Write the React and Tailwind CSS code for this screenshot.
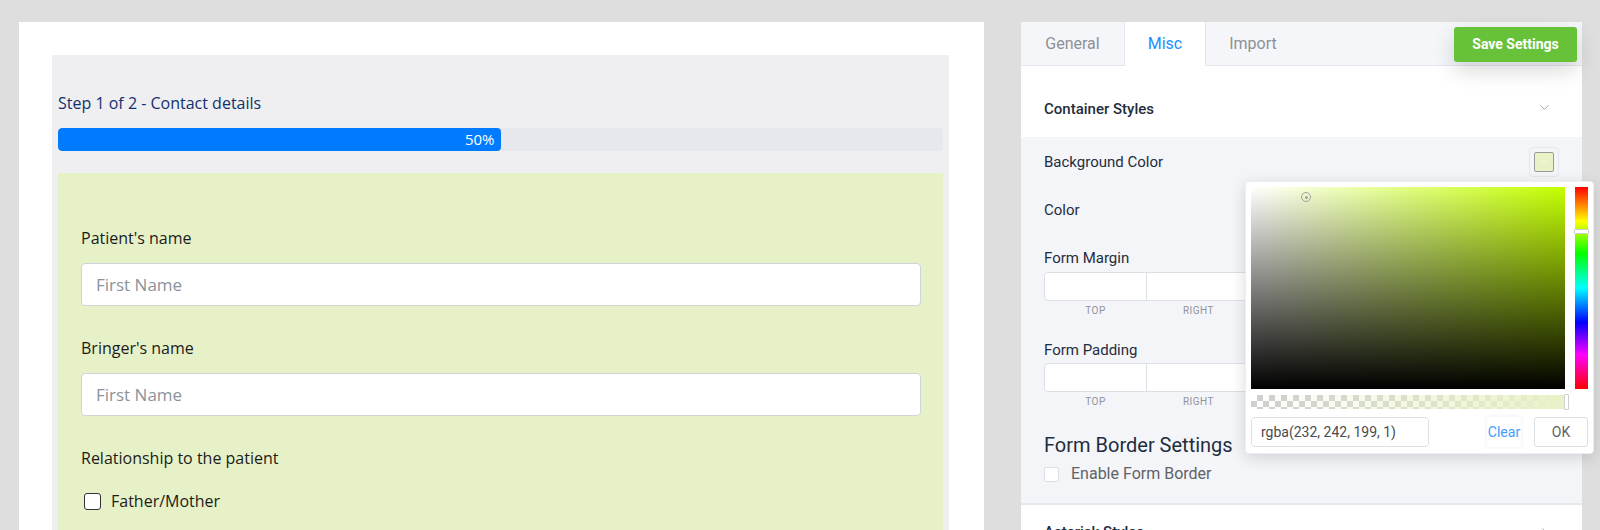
import { ChevronDown, ChevronRight } from 'lucide-react';

const leftFont = "font-['Open_Sans',sans-serif]";
const rightFont = "font-['Roboto',sans-serif]";

// small custom checkbox, drawn with spans so it looks the same everywhere
function Box({ className }) {
  return <span className={`inline-block shrink-0 bg-white ${className}`} />;
}

function FormPreview() {
  return (
    <div className={`w-[965px] h-[508px] bg-white pt-[33px] pl-[33px] pr-[35px] ${leftFont}`}>
      <div className="h-full bg-[#efeff2] px-[6px] pt-[37px]">
        <p className="text-[16px] leading-[22px] text-[#12306b]">Step 1 of 2 - Contact details</p>

        {/* progress bar */}
        <div className="mt-[14px] h-[23px] rounded-[4px] bg-[#e7e8ee] overflow-hidden">
          <div className="w-1/2 h-full bg-[#007bff] rounded-[4px] flex items-center justify-end pr-[6px] text-white text-[15px]">
            50%
          </div>
        </div>

        {/* form body */}
        <div className="mt-[22px] h-full bg-[#e7f1c8] pl-[23px] pr-[22px] pt-[53px]">
          <label className="block text-[16px] leading-[24px] font-medium text-[#1c1c1c]">Patient's name</label>
          <input
            type="text"
            placeholder="First Name"
            className="mt-[13px] w-full h-[43px] bg-white border border-[#ced4da] rounded-[4px] px-[14px] text-[17px] placeholder:text-[#8b929a] outline-none"
          />
          <label className="block mt-[30px] text-[16px] leading-[24px] font-medium text-[#1c1c1c]">Bringer's name</label>
          <input
            type="text"
            placeholder="First Name"
            className="mt-[13px] w-full h-[43px] bg-white border border-[#ced4da] rounded-[4px] px-[14px] text-[17px] placeholder:text-[#8b929a] outline-none"
          />
          <label className="block mt-[30px] text-[16px] leading-[24px] font-medium text-[#1c1c1c]">
            Relationship to the patient
          </label>
          <div className="mt-[19px] flex items-center h-[24px] pl-[3px]">
            <Box className="w-[17px] h-[17px] border-[1.5px] border-[#333] rounded-[3px]" />
            <span className="ml-[10px] text-[16px] text-[#1c1c1c]">Father/Mother</span>
          </div>
        </div>
      </div>
    </div>
  );
}

function BoxInputs() {
  const labels = ['TOP', 'RIGHT', 'BOTTOM', 'LEFT'];
  return (
    <>
      <div className="flex">
        {labels.map((l, i) => (
          <div
            key={l}
            className={`w-[103px] h-[29px] bg-white border border-[#dcdfe6] ${i === 0 ? 'rounded-l-[4px]' : '-ml-px'}`}
          />
        ))}
      </div>
      <div className="flex mt-[4px]">
        {labels.map((l) => (
          <span key={l} className="w-[103px] text-center text-[10px] leading-[12px] tracking-[0.5px] text-[#8f939a]">
            {l}
          </span>
        ))}
      </div>
    </>
  );
}

function ColorPicker() {
  return (
    <div className="absolute left-[224px] top-[159px] w-[349px] h-[273px] bg-white border border-[#ebeef5] rounded-[4px] shadow-[0_4px_16px_rgba(0,0,0,0.14)] p-[5px]">
      <div className="flex gap-[10px]">
        {/* saturation / value area */}
        <div className="relative w-[314px] h-[202px] bg-[#c4ff00]">
          <div className="absolute inset-0 bg-[linear-gradient(to_right,#fff,rgba(255,255,255,0))]" />
          <div className="absolute inset-0 bg-[linear-gradient(to_top,#000,rgba(0,0,0,0))]" />
          <div className="absolute left-[50px] top-[5px] w-[10px] h-[10px] rounded-full border-[1.5px] border-[#a0a0a0] flex items-center justify-center">
            <span className="w-[3px] h-[3px] rounded-full bg-[#a0a0a0]" />
          </div>
        </div>
        {/* hue bar */}
        <div className="relative w-[13px] h-[202px] bg-[linear-gradient(to_bottom,#f00_0%,#ff0_17%,#0f0_33%,#0ff_50%,#00f_67%,#f0f_83%,#f00_100%)]">
          <div className="absolute left-[-1px] right-[-1px] top-[42px] h-[5px] bg-white border border-[#cfcfcf] rounded-[1px]" />
        </div>
      </div>

      {/* alpha bar */}
      <div className="relative mt-[6px] w-[316px] h-[14px] bg-[image:repeating-conic-gradient(#cfcfcf_0%_25%,#fff_0%_50%)] bg-[length:12px_12px]">
        <div className="absolute inset-0 bg-[linear-gradient(to_right,rgba(232,242,199,0),rgba(232,242,199,1))]" />
        <div className="absolute right-[-2px] top-[-1px] w-[5px] h-[16px] bg-white border border-[#cfcfcf] rounded-[1px]" />
      </div>

      <div className={`mt-[8px] flex items-center h-[30px] ${rightFont}`}>
        <div className="w-[178px] h-[30px] border border-[#dcdfe6] rounded-[4px] px-[9px] flex items-center text-[14px] text-[#4a4c50]">
          rgba(232, 242, 199, 1)
        </div>
        <button className="ml-auto w-[34px] h-[30px] bg-white rounded-[3px] shadow-[0_0_4px_rgba(0,0,0,0.08)] text-[14px] text-[#409eff]">
          Clear
        </button>
        <button className="ml-[13px] w-[54px] h-[30px] bg-white border border-[#dcdfe6] rounded-[3px] text-[14px] text-[#606266]">
          OK
        </button>
      </div>
    </div>
  );
}

function SettingsPanel() {
  return (
    <div className={`relative w-[561px] h-[508px] bg-white flex flex-col ${rightFont}`}>
      {/* tabs */}
      <div className="h-[44px] shrink-0 flex bg-[#f5f6fa]">
        <div className="w-[103px] flex items-center justify-center text-[16px] text-[#8d9096] border-b border-[#e4e7ed]">
          General
        </div>
        <div className="w-[82px] flex items-center justify-center text-[16px] text-[#1a90ff] bg-white border-x border-[#e4e7ed]">
          Misc
        </div>
        <div className="w-[94px] flex items-center justify-center text-[16px] text-[#8d9096] border-b border-[#e4e7ed]">
          Import
        </div>
        <div className="flex-1 flex justify-end items-start border-b border-[#e4e7ed]">
          <button className="mt-[5px] mr-[5px] w-[123px] h-[35px] bg-[#67c23a] rounded-[3px] text-white text-[14px] font-bold shadow-[0_8px_22px_rgba(0,0,0,0.16)]">
            Save Settings
          </button>
        </div>
      </div>

      {/* container styles header */}
      <div className="h-[71px] shrink-0 px-[23px] pt-[32px] flex justify-between items-start">
        <span className="text-[15px] leading-[22px] font-medium text-[#1f2d3d]">Container Styles</span>
        <ChevronDown size={15} strokeWidth={1.3} className="mt-[2px] mr-[7px] text-[#8d9099]" />
      </div>

      {/* section body */}
      <div className="bg-[#f4f5f9] px-[23px] pt-[10px] pb-[19px] flex flex-col text-[#1f2d3d]">
        <div className="h-[30px] flex items-center justify-between">
          <span className="text-[15px]">Background Color</span>
          <div className="w-[30px] h-[30px] border border-[#e4e6ea] rounded-[4px] flex items-center justify-center">
            <div className="w-[20px] h-[20px] bg-[#e8f2c7] border border-[#9a9a9a] rounded-[2px] flex items-center justify-center">
              <ChevronDown size={10} strokeWidth={1.5} className="text-white" />
            </div>
          </div>
        </div>
        <span className="mt-[22px] text-[15px] leading-[22px]">Color</span>

        <span className="mt-[27px] text-[15px] leading-[20px]">Form Margin</span>
        <div className="mt-[4px]">
          <BoxInputs />
        </div>

        <span className="mt-[23px] text-[15px] leading-[20px]">Form Padding</span>
        <div className="mt-[3px]">
          <BoxInputs />
        </div>

        <span className="mt-[23px] text-[20px] leading-[28px]">Form Border Settings</span>
        <div className="mt-[5px] h-[20px] flex items-center">
          <Box className="w-[15px] h-[15px] border border-[#dcdfe6] rounded-[2px]" />
          <span className="ml-[12px] text-[16px] text-[#606266]">Enable Form Border</span>
        </div>
      </div>

      {/* next collapsed section */}
      <div className="border-t-2 border-[#e6e8ee] bg-white px-[23px] pt-[16px] flex justify-between items-start">
        <span className="text-[15px] leading-[22px] font-medium text-[#1f2d3d]">Asterisk Styles</span>
        <ChevronRight size={15} strokeWidth={1.3} className="mt-[4px] mr-[7px] text-[#8d9099]" />
      </div>

      <ColorPicker />
    </div>
  );
}

export default function App() {
  return (
    <div className="h-[530px] overflow-hidden bg-[#dedede] flex items-start pt-[22px] pl-[19px] gap-[37px]">
      <FormPreview />
      <SettingsPanel />
    </div>
  );
}
